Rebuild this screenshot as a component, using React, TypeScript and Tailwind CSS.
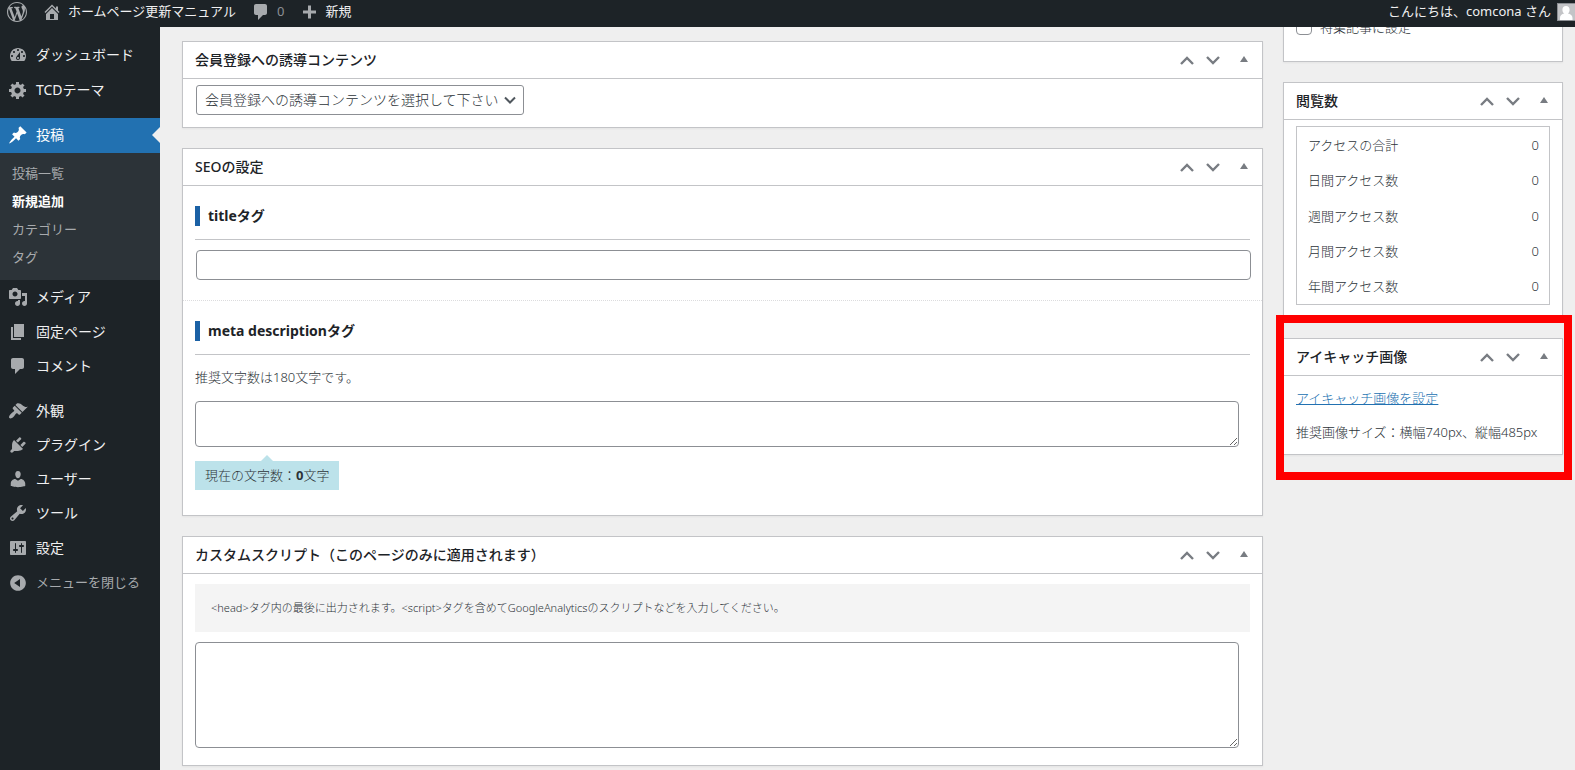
import { useState, type ReactNode } from 'react'
import { clsx } from 'clsx'

const icons = {
  wordpress:
    'M20 10c0-5.51-4.49-10-10-10C4.48 0 0 4.49 0 10c0 5.52 4.48 10 10 10 5.51 0 10-4.48 10-10zM7.78 15.37L4.37 6.22c.55-.02 1.17-.08 1.17-.08.5-.06.44-1.13-.06-1.11 0 0-1.45.11-2.37.11-.18 0-.37 0-.58-.01C4.12 2.69 6.87 1.11 10 1.11c2.33 0 4.45.87 6.05 2.34-.68-.11-1.65.39-1.65 1.58 0 .74.45 1.36.9 2.1.35.61.55 1.36.55 2.46 0 1.49-1.4 5-1.4 5l-3.03-8.37c.54-.02.82-.17.82-.17.5-.05.44-1.25-.06-1.22 0 0-1.44.12-2.38.12-.87 0-2.33-.12-2.33-.12-.5-.03-.56 1.2-.06 1.22l.92.08 1.26 3.41zM17.41 10c.24-.64.74-1.87.43-4.25.7 1.29 1.05 2.71 1.05 4.25 0 3.29-1.73 6.24-4.4 7.78.97-2.59 1.94-5.2 2.92-7.78zM6.1 18.09C3.12 16.65 1.11 13.53 1.11 10c0-1.3.23-2.48.72-3.59C3.25 10.3 4.67 14.2 6.1 18.09zm4.03-6.63l2.58 6.98c-.86.29-1.76.45-2.71.45-.79 0-1.57-.11-2.29-.33.81-2.38 1.62-4.74 2.42-7.1z',
  home: 'M16 8.5l1.53 1.53-1.06 1.06L10 4.6l-6.47 6.49-1.06-1.06L10 2.5l4 4v-2h2v4zm-6-2.46l6 5.99V18H4v-5.97zM12 17v-5H8v5h4z',
  comments: 'M5 2h9c1.1 0 2 .9 2 2v7c0 1.1-.9 2-2 2h-2l-5 5v-5H5c-1.1 0-2-.9-2-2V4c0-1.1.9-2 2-2z',
  plus: 'M17 8.500v3h-5v5H9v-5H4v-3h5v-5h3v5z',
  dashboard:
    'M3.76 16h12.48c1.1-1.37 1.76-3.11 1.76-5 0-4.42-3.58-8-8-8s-8 3.58-8 8c0 1.89.66 3.63 1.76 5zM10 4c.55 0 1 .45 1 1s-.45 1-1 1-1-.45-1-1 .45-1 1-1zM6 6c.55 0 1 .45 1 1s-.45 1-1 1-1-.45-1-1 .45-1 1-1zm8 0c.55 0 1 .45 1 1s-.45 1-1 1-1-.45-1-1 .45-1 1-1zm-5.37 5.55L12 7v6c0 1.1-.9 2-2 2s-2-.9-2-2c0-.57.24-1.08.63-1.45zM4 10c.55 0 1 .45 1 1s-.45 1-1 1-1-.45-1-1 .45-1 1-1zm12 0c.55 0 1 .45 1 1s-.45 1-1 1-1-.45-1-1 .45-1 1-1zm-5 3c0-.55-.45-1-1-1s-1 .45-1 1 .45 1 1 1 1-.45 1-1z',
  gear: 'M18 12h-2.18c-.17.7-.44 1.35-.81 1.93l1.54 1.54-2.1 2.1-1.54-1.54c-.58.36-1.23.63-1.91.79V19H8v-2.18c-.68-.16-1.33-.43-1.91-.79l-1.54 1.54-2.12-2.12 1.54-1.54c-.36-.58-.63-1.23-.79-1.91H1V9.03h2.17c.16-.7.44-1.35.8-1.94L2.43 5.55l2.1-2.1 1.54 1.54c.58-.37 1.24-.64 1.93-.81V2h3v2.18c.68.16 1.33.43 1.91.79l1.54-1.54 2.12 2.12-1.54 1.54c.36.59.64 1.24.8 1.94H18V12zm-8.5 1.5c1.66 0 3-1.34 3-3s-1.34-3-3-3-3 1.34-3 3 1.34 3 3 3z',
  pin: 'M10.44 3.02l1.82-1.82 6.36 6.35-1.83 1.82c-1.05-.68-2.48-.57-3.41.36l-.75.75c-.92.93-1.04 2.35-.35 3.41l-1.83 1.82-2.41-2.41-2.8 2.79c-.42.42-3.38 2.71-3.8 2.29s1.86-3.39 2.28-3.81l2.79-2.79L4.1 9.36l1.83-1.82c1.05.69 2.48.57 3.4-.36l.75-.75c.93-.92 1.05-2.35.36-3.41z',
  media:
    'M13 11V4c0-.55-.45-1-1-1h-1.67L9 1H5L3.67 3H2c-.55 0-1 .45-1 1v7c0 .55.45 1 1 1h10c.55 0 1-.45 1-1zM7 4.5c1.38 0 2.5 1.12 2.5 2.5S8.38 9.5 7 9.5 4.5 8.38 4.5 7 5.62 4.5 7 4.5zM14 6h5v10.5c0 1.38-1.12 2.5-2.5 2.5S14 17.88 14 16.5s1.12-2.5 2.5-2.5c.17 0 .34.02.5.05V9h-3V6zm-4 8.05V13h2v3.5c0 1.38-1.12 2.5-2.5 2.5S7 17.88 7 16.5 8.12 14 9.5 14c.17 0 .34.02.5.05z',
  page: 'M6 15V2h10v13H6zm-1 1h8v2H3V5h2v11z',
  appearance:
    'M14.48 11.06L7.41 3.99l1.5-1.5c.5-.56 2.3-.47 3.51.32 1.21.8 1.43 1.28 2.91 2.1 1.18.64 2.45 1.26 4.45.85zm-.71.71L6.7 4.7 4.93 6.47c-.39.39-.39 1.02 0 1.41l1.06 1.06c.39.39.39 1.03 0 1.42-.6.6-1.43 1.11-2.21 1.69-.35.26-.7.53-1.01.84C1.43 14.23.4 16.08 1.4 17.07c.99 1 2.84-.03 4.18-1.36.31-.31.58-.66.85-1.02.57-.78 1.08-1.61 1.69-2.21.39-.39 1.02-.39 1.41 0l1.06 1.06c.39.39 1.02.39 1.41 0z',
  plugins:
    'M13.11 4.36L9.87 7.6 8 5.73l3.24-3.24c.35-.34 1.05-.2 1.56.32.52.51.66 1.21.31 1.55zm-8 1.77l.91-1.12 9.01 9.01-1.19.84c-.71.71-2.63 1.16-3.82 1.16H6.14L4.9 17.26c-.59.59-1.54.59-2.12 0-.59-.58-.59-1.53 0-2.12l1.24-1.24v-3.88c0-1.13.4-3.19 1.09-3.89zm7.26 3.97l3.24-3.24c.34-.35 1.04-.21 1.55.31.52.51.66 1.21.31 1.55l-3.24 3.25z',
  users:
    'M10 9.25c-2.27 0-2.73-3.44-2.73-3.44C7 4.02 7.82 2 9.97 2c2.16 0 2.98 2.02 2.71 3.81 0 0-.41 3.44-2.68 3.44zm0 2.57L12.72 10c2.39 0 4.52 2.33 4.52 4.53v2.49s-3.65 1.13-7.24 1.13c-3.65 0-7.24-1.13-7.24-1.13v-2.49c0-2.25 1.94-4.48 4.47-4.48z',
  tools:
    'M16.68 9.77c-1.34 1.34-3.3 1.67-4.95.99l-5.41 6.52c-.99.99-2.59.99-3.58 0s-.99-2.59 0-3.57l6.52-5.42c-.68-1.65-.35-3.61.99-4.95 1.28-1.28 3.12-1.62 4.72-1.06l-2.89 2.89 2.82 2.82 2.86-2.87c.53 1.58.18 3.39-1.08 4.65zM3.81 16.21c.4.39 1.04.39 1.43 0 .4-.4.4-1.04 0-1.43-.39-.4-1.03-.4-1.43 0-.39.39-.39 1.03 0 1.43z',
  settings:
    'M18 16V4c0-.55-.45-1-1-1H3c-.55 0-1 .45-1 1v12c0 .55.45 1 1 1h14c.55 0 1-.45 1-1zM8 11h1c.55 0 1 .45 1 1s-.45 1-1 1H8v1.5c0 .28-.22.5-.5.5s-.5-.22-.5-.5V13H6c-.55 0-1-.45-1-1s.45-1 1-1h1V5.5c0-.28.22-.5.5-.5s.5.22.5.5V11zm5-2h-1c-.55 0-1-.45-1-1s.45-1 1-1h1V5.5c0-.28.22-.5.5-.5s.5.22.5.5V7h1c.55 0 1 .45 1 1s-.45 1-1 1h-1v5.5c0 .28-.22.5-.5.5s-.5-.22-.5-.5V9z',
  collapse: 'M10 2.16c4.33 0 7.84 3.51 7.84 7.84s-3.51 7.84-7.84 7.84S2.16 14.33 2.16 10 5.71 2.16 10 2.16zm2 11.72V6.12L6.18 9.97z',
}

type IconName = keyof typeof icons

interface MenuItem {
  label: string
  icon: IconName
  tall?: boolean
}

const menuTop: MenuItem[] = [
  { label: 'ダッシュボード', icon: 'dashboard' },
  { label: 'TCDテーマ', icon: 'gear', tall: true },
]

const menuContent: MenuItem[] = [
  { label: 'メディア', icon: 'media' },
  { label: '固定ページ', icon: 'page', tall: true },
  { label: 'コメント', icon: 'comments' },
]

const menuAdmin: MenuItem[] = [
  { label: '外観', icon: 'appearance' },
  { label: 'プラグイン', icon: 'plugins' },
  { label: 'ユーザー', icon: 'users' },
  { label: 'ツール', icon: 'tools' },
  { label: '設定', icon: 'settings', tall: true },
]

const submenu = ['投稿一覧', '新規追加', 'カテゴリー', 'タグ']

const accessCounts = [
  { label: 'アクセスの合計', value: 0 },
  { label: '日間アクセス数', value: 0 },
  { label: '週間アクセス数', value: 0 },
  { label: '月間アクセス数', value: 0 },
  { label: '年間アクセス数', value: 0 },
]

function Icon({ name, className }: { name: IconName; className?: string }) {
  return (
    <svg viewBox="0 0 20 20" fill="currentColor" fillRule="evenodd" className={clsx('size-5 shrink-0', className)} aria-hidden="true">
      <path d={icons[name]} />
    </svg>
  )
}

function Chevron({ down = false }: { down?: boolean }) {
  return (
    <svg viewBox="0 0 14 10" fill="none" stroke="currentColor" strokeWidth="2.4" className="w-[14px]" aria-hidden="true">
      <path d={down ? 'M1 2l6 6 6-6' : 'M1 9l6-6 6 6'} />
    </svg>
  )
}

function MenuLink({ item }: { item: MenuItem }) {
  return (
    <li>
      <a href="#" className={clsx('flex items-center gap-2 pl-2 text-sm text-[#f0f0f1]', item.tall ? 'h-[35px]' : 'h-[34px]')}>
        <Icon name={item.icon} className="text-[#a7aaad]" />
        {item.label}
      </a>
    </li>
  )
}

function Postbox({ title, children }: { title: string; children: ReactNode }) {
  const [open, setOpen] = useState(true)

  return (
    <section className="border border-[#c3c4c7] bg-white shadow-xs">
      <div className="flex h-[37px] items-center border-b border-[#c3c4c7] pl-3 text-[#787c82]">
        <h2 className="flex-1 text-sm font-medium text-[#1d2327]">{title}</h2>
        <button type="button" aria-label="上に移動" className="flex h-9 w-[26px] items-center justify-center">
          <Chevron />
        </button>
        <button type="button" aria-label="下に移動" className="flex h-9 w-[26px] items-center justify-center">
          <Chevron down />
        </button>
        <button type="button" aria-label="パネルを切り替え" onClick={() => setOpen(!open)} className="flex size-9 items-center justify-center">
          <svg viewBox="0 0 8 8" fill="currentColor" className="w-2" aria-hidden="true">
            <path d="M4 0l4 6H0z" />
          </svg>
        </button>
      </div>
      {open && children}
    </section>
  )
}

// Heading with the blue bar in front and a rule under it
function FieldHeading({ htmlFor, children }: { htmlFor: string; children: ReactNode }) {
  return (
    <h3 className="flex h-[54px] items-center gap-2 border-b border-[#c3c4c7] pt-[6px] text-sm font-bold text-[#1d2327]">
      <span className="h-5 w-[5px] bg-[#1b61a5]" />
      <label htmlFor={htmlFor}>{children}</label>
    </h3>
  )
}

export default function App() {
  const [description, setDescription] = useState('')

  return (
    <div className="min-h-screen bg-[#efefef] font-['Noto_Sans','Noto_Sans_CJK_JP',sans-serif] text-[13px] text-[#2c3338]">
      <header className="fixed inset-x-0 top-0 z-10 flex h-[27px] items-center bg-[#1d2327] pb-1 pl-[7px] text-[#f0f0f1]">
        <a href="#" aria-label="WordPress" className="mr-[15px] text-[#a7aaad]">
          <Icon name="wordpress" />
        </a>
        <a href="#" className="mr-[15px] flex items-center gap-[6px]">
          <Icon name="home" className="text-[#a7aaad]" />
          ホームページ更新マニュアル
        </a>
        <a href="#" className="mr-[15px] flex items-center gap-[6px] text-[#8c8f94]">
          <Icon name="comments" className="text-[#a7aaad]" />0
        </a>
        <a href="#" className="flex items-center gap-[6px]">
          <Icon name="plus" className="text-[#a7aaad]" />
          新規
        </a>
        <a href="#" className="ml-auto flex items-center gap-[6px]">
          こんにちは、comcona さん
          <svg viewBox="0 0 18 18" className="size-[18px]" aria-hidden="true">
            <path fill="#8c8f94" d="M0 0h18v18H0z" />
            <path fill="#c3c4c7" d="M1 1h17v16H1z" />
            <path fill="#fff" d="M9 3c2.3 0 3.6 1.6 3.6 3.7 0 1.7-.7 3.2-1.8 3.9 2.7.5 4.7 2 4.7 4.4v2H3v-2c0-2.4 1.7-3.9 4.3-4.4C6.1 9.9 5.4 8.4 5.4 6.7 5.4 4.6 6.7 3 9 3z" />
          </svg>
        </a>
      </header>

      <div className="flex min-h-screen">
        <nav className="w-40 shrink-0 bg-[#1d2327] pt-[38px]">
          <ul>
            {menuTop.map(item => <MenuLink key={item.label} item={item} />)}
          </ul>
          <div className="mt-[11px]">
            <a href="#" className="relative flex h-[35px] items-center gap-2 bg-[#2271b1] pb-[2px] pl-2 text-sm text-white">
              <Icon name="pin" />
              投稿
              <span className="absolute right-0 border-y-8 border-r-8 border-y-transparent border-r-[#efefef]" />
            </a>
            <ul className="h-[127px] bg-[#2c3338] pt-[7px] text-[#a7aaad]">
              {submenu.map(label => (
                <li key={label}>
                  <a href="#" className={clsx('flex h-7 items-center pl-3', label === '新規追加' && 'font-bold text-white')}>
                    {label}
                  </a>
                </li>
              ))}
            </ul>
          </div>
          <ul>
            {menuContent.map(item => <MenuLink key={item.label} item={item} />)}
          </ul>
          <ul className="mt-[11px]">
            {menuAdmin.map(item => <MenuLink key={item.label} item={item} />)}
          </ul>
          <button type="button" className="flex h-[35px] items-center gap-2 pl-2 text-[#a7aaad]">
            <Icon name="collapse" />
            メニューを閉じる
          </button>
        </nav>

        <div className="flex flex-1 gap-5 pr-3 pl-[22px]">
          <main className="flex min-w-0 flex-1 flex-col gap-5 pt-[41px] pb-1">
            <Postbox title="会員登録への誘導コンテンツ">
              <div className="px-[13px] pt-[6px] pb-3">
                <div className="relative flex w-[328px] items-center">
                  <select
                    aria-label="会員登録への誘導コンテンツ"
                    className="h-[30px] w-full appearance-none rounded-[3px] border border-[#8c8f94] bg-white pr-6 pl-2 text-sm font-light text-[#2c3338]"
                  >
                    <option>会員登録への誘導コンテンツを選択して下さい</option>
                  </select>
                  <svg viewBox="0 0 12 8" fill="none" stroke="#50575e" strokeWidth="2" className="pointer-events-none absolute right-2 w-3" aria-hidden="true">
                    <path d="M1 1.5l5 5 5-5" />
                  </svg>
                </div>
              </div>
            </Postbox>

            <Postbox title="SEOの設定">
              <div className="border-b border-dotted border-[#dcdcde] px-3 pb-5">
                <FieldHeading htmlFor="seo-title">titleタグ</FieldHeading>
                <input id="seo-title" type="text" className="mx-px mt-[10px] block h-[30px] w-full rounded-[4px] border border-[#8c8f94] px-2" />
              </div>
              <div className="px-3 pb-[25px]">
                <FieldHeading htmlFor="seo-description">meta descriptionタグ</FieldHeading>
                <p className="mt-3 leading-5 font-light">推奨文字数は180文字です。</p>
                <div className="pr-[11px]">
                  <textarea
                    id="seo-description"
                    value={description}
                    onChange={e => setDescription(e.target.value)}
                    className="mt-[14px] block h-[46px] w-full rounded-[4px] border border-[#8c8f94] px-2"
                  />
                </div>
                <p className="relative mt-[14px] inline-block bg-[#bce2ea] px-[10px] leading-[29px] font-light">
                  <span className="absolute -top-[6px] left-[66px] border-x-[6px] border-b-[6px] border-x-transparent border-b-[#bce2ea]" />
                  現在の文字数：<strong className="font-bold">{description.length}</strong>文字
                </p>
              </div>
            </Postbox>

            <Postbox title="カスタムスクリプト（このページのみに適用されます）">
              <div className="px-3 pt-[10px] pb-[17px]">
                <label htmlFor="custom-script" className="block bg-[#f4f4f4] px-4 text-[11px] leading-[48px] font-light">
                  {'<head>タグ内の最後に出力されます。<script>タグを含めてGoogleAnalyticsのスクリプトなどを入力してください。'}
                </label>
                <div className="pr-[11px]">
                  <textarea id="custom-script" className="mt-[10px] block h-[106px] w-full rounded-[4px] border border-[#8c8f94] px-2" />
                </div>
              </div>
            </Postbox>
          </main>

          <aside className="flex w-[280px] shrink-0 flex-col gap-5">
            <section className="h-[62px] border border-t-0 border-[#c3c4c7] bg-white px-3 pt-[17px] shadow-xs">
              <label className="flex items-center gap-2 leading-5 font-light">
                <input type="checkbox" className="size-4 appearance-none rounded-[4px] border border-[#8c8f94] bg-white checked:bg-[#2271b1]" />
                特集記事に設定
              </label>
            </section>

            <Postbox title="閲覧数">
              <div className="px-3 pt-[6px] pb-3">
                <table className="h-[179px] w-full border border-[#c3c4c7] font-light">
                  <tbody>
                    {accessCounts.map(row => (
                      <tr key={row.label}>
                        <th scope="row" className="pt-[2px] pl-[11px] text-left font-light">{row.label}</th>
                        <td className="pt-[2px] pr-[10px] text-right">{row.value}</td>
                      </tr>
                    ))}
                  </tbody>
                </table>
              </div>
            </Postbox>

            <div className="relative">
              <Postbox title="アイキャッチ画像">
                <div className="space-y-[14px] px-3 pt-3 pb-3 leading-5 font-light">
                  <p>
                    <a href="#" className="text-[#2271b1] underline">アイキャッチ画像を設定</a>
                  </p>
                  <p>推奨画像サイズ：横幅740px、縦幅485px</p>
                </div>
              </Postbox>
              <div className="pointer-events-none absolute -top-[23px] -right-[9px] -bottom-[25px] -left-[7px] border-8 border-[#ff0000]" />
            </div>
          </aside>
        </div>
      </div>
    </div>
  )
}
